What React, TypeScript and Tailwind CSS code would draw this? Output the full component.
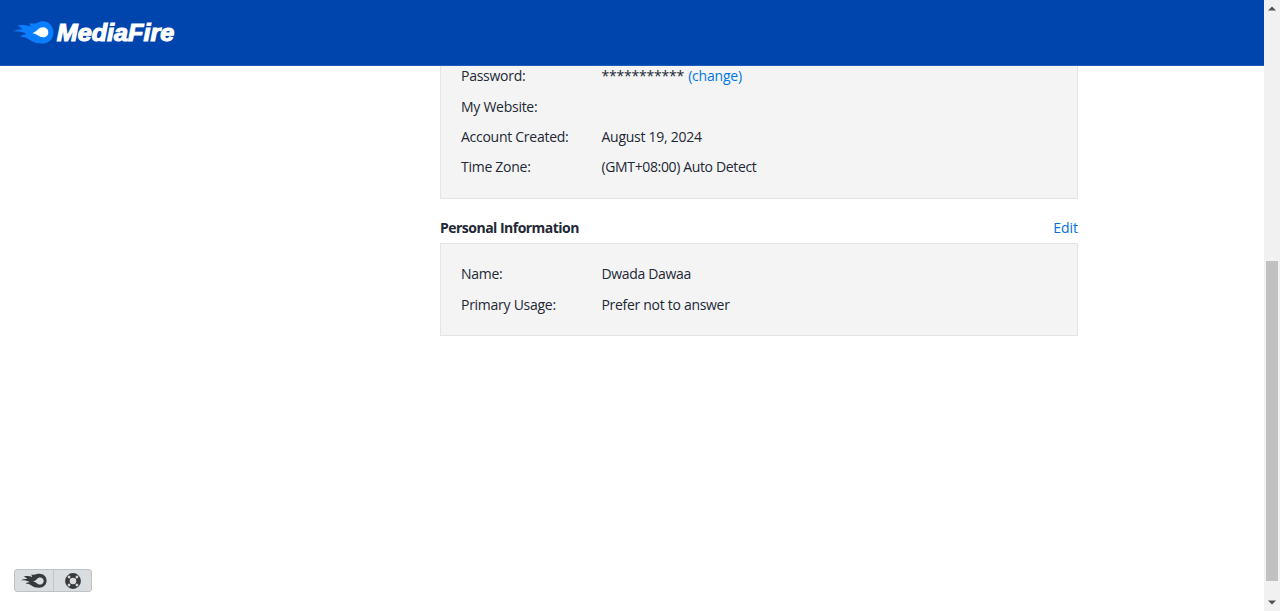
import React from "react";

interface InfoRow {
	label: string;
	value?: string;
	action?: string;
	valueClass?: string;
}

const accountRows: InfoRow[] = [
	{
		label: "Password:",
		value: "***********",
		action: "(change)",
		valueClass: "tracking-[-0.2px]",
	},
	{ label: "My Website:" },
	{
		label: "Account Created:",
		value: "August 19, 2024",
		valueClass: "tracking-[-0.26px]",
	},
	{
		label: "Time Zone:",
		value: "(GMT+08:00) Auto Detect",
		valueClass: "tracking-[-0.36px]",
	},
];

const personalRows: InfoRow[] = [
	{
		label: "Name:",
		value: "Dwada Dawaa",
		valueClass: "tracking-[-0.33px]",
	},
	{
		label: "Primary Usage:",
		value: "Prefer not to answer",
		valueClass: "tracking-[-0.3px]",
	},
];

const Logo = () => (
	<svg width="164" height="30" viewBox="0 0 164 30" aria-label="MediaFire">
		<path
			fill="#0b7dff"
			d="M0 13.4C3.5 11.6 6.2 11.2 9.3 11.8C8.7 9.9 6.6 8.4 3.8 7.6C9 6.5 13.4 6.9 17.2 8.5C17.6 7.2 16.8 6.2 15.7 5.5C18.8 5.4 21.3 5.7 23.2 5.2C25 4.6 27 3.2 29.6 3.2C35.8 3.2 40.5 8 40.5 14.4C40.5 20.9 35.8 25.6 29.2 25.6C24.2 25.6 20.4 24.4 16.8 22C13.8 20 10.6 18.8 6.7 18.6C8.7 17.2 11 16.4 13.7 16.2C9.3 13.2 5.2 12.8 0 13.4Z"
		/>
		<path
			fill="#fff"
			d="M19.3 15.3C21.5 14.2 23 13.1 24.6 11.7C26.5 10.1 28.2 9.3 30.2 9.3C33.2 9.3 35.3 11.6 35.3 14.4C35.3 17.2 33.1 19.3 30.1 19.3C27.6 19.3 25.8 18.1 24.2 17C22.7 16 21.2 15.5 19.3 15.3Z"
		/>
		<text
			x="43.8"
			y="22.9"
			className="font-['Liberation_Sans',Arial,sans-serif] text-[23px] font-bold italic"
			fill="#fff"
			stroke="#fff"
			strokeWidth="1.1"
			textLength="117.4"
			lengthAdjust="spacingAndGlyphs"
		>
			MediaFire
		</text>
	</svg>
);

const FlameIcon = () => (
	<svg width="26" height="16" viewBox="0 0 26 16">
		<path
			fill="#37393b"
			fillRule="evenodd"
			d="M0 7.2C2 6 4 5.7 6 6C5.4 4.8 4.2 4 2.7 3.6C6 2.8 8.8 3 11 4C11.2 3 10.7 2.3 9.9 1.7C12 1.7 13.8 2 15.2 1.3C20.9 -.5 25.6 2.8 25.6 7.6C25.6 12 22.4 14.8 18.2 14.8C14.6 14.8 12.3 14 10.5 12.6C8.8 11.3 7 10.7 4.6 10.6C5.9 9.6 7.2 9.2 8.8 9.1C6 7.3 3.2 7 0 7.2ZM12 8.6C14 8 15 7.2 16 6C17.8 4.1 20.3 4.2 21.7 5.5C23.2 7.1 22.9 9.7 21.1 10.9C19.4 12 17.2 11.6 15.8 10.3C14.6 9.4 13.5 8.8 12 8.6Z"
		/>
	</svg>
);

const LifebuoyIcon = () => (
	<svg width="16" height="16" viewBox="0 0 16 16" fill="none">
		<circle cx="8" cy="8" r="5.6" stroke="#37393b" strokeWidth="4.6" />
		<path
			d="M3.2 3.2L4.9 4.9M12.8 3.2L11.1 4.9M3.2 12.8L4.9 11.1M12.8 12.8L11.1 11.1"
			stroke="#dadddf"
			strokeWidth="2.4"
		/>
	</svg>
);

const InfoPanel: React.FC<{ rows: InfoRow[] }> = ({ rows }) => (
	<dl className="border border-[#e3e4e5] bg-[#f4f4f4] px-5 pt-[15px] pb-[15.3px]">
		{rows.map((row) => (
			<div key={row.label} className="flex h-[30.4px] items-center">
				<dt className="w-[140.5px] tracking-[-0.27px]">{row.label}</dt>
				<dd className={row.valueClass}>
					{row.value}
					{row.action && (
						<a href="#" className="ml-1 text-[#0077e6]">
							{row.action}
						</a>
					)}
				</dd>
			</div>
		))}
	</dl>
);

const App: React.FC = () => {
	return (
		<div className="flex h-[611px] overflow-hidden bg-white font-['Open_Sans',sans-serif] text-sm text-[#222835]">
			<div className="flex flex-1 flex-col">
				<header className="z-10 flex h-[66px] shrink-0 items-center border-b border-[#1f5dbb] bg-[#0045ad] px-[13px]">
					<Logo />
				</header>

				{/* the account panel is scrolled partly under the header */}
				<main className="-mt-[21px] ml-[440px] w-[638px] flex-1">
					<InfoPanel rows={accountRows} />
					<div className="flex h-[44.1px] items-end justify-between pb-[5px]">
						<h2 className="font-bold tracking-[-0.52px]">
							Personal Information
						</h2>
						<a href="#" className="text-[#0070e0]">
							Edit
						</a>
					</div>
					<InfoPanel rows={personalRows} />
				</main>

				<footer className="mb-[19px] ml-3.5 flex h-[23px] w-[78px] rounded-[3px] border border-[#bfc2c4] bg-[#dadddf]">
					<button className="flex w-[39px] items-center justify-center border-r border-[#c3c6c8]">
						<FlameIcon />
					</button>
					<button className="flex flex-1 items-center justify-center">
						<LifebuoyIcon />
					</button>
				</footer>
			</div>

			<div className="flex w-4 flex-col items-center justify-between bg-[#f1f1f1] py-[6px]">
				<svg width="8" height="5" viewBox="0 0 8 5">
					<path d="M0 4.5L4 .5L8 4.5Z" fill="#505050" />
				</svg>
				<div className="mt-[250px] mb-auto h-80 w-3 bg-[#c1c1c1]" />
				<svg width="8" height="5" viewBox="0 0 8 5">
					<path d="M0 .5L4 4.5L8 .5Z" fill="#505050" />
				</svg>
			</div>
		</div>
	);
};

export default App;
